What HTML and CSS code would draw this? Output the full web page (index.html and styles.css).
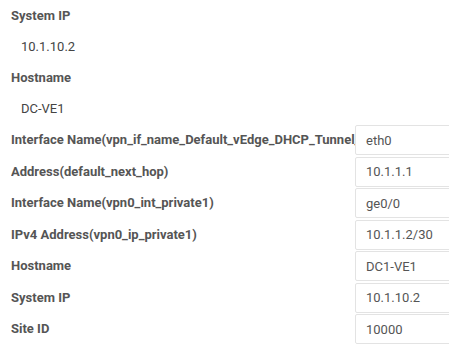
FILE: index.html
```html
<!DOCTYPE html>
<html lang="en">
<head>
    <meta charset="UTF-8">
    <title>Device Template Values</title>
    <link rel="stylesheet" href="styles.css">
</head>
<body>
    <div class="panel">
        <div class="field">
            <div class="field-label">System IP</div>
            <div class="field-value">10.1.10.2</div>
        </div>
        <div class="field">
            <div class="field-label">Hostname</div>
            <div class="field-value">DC-VE1</div>
        </div>

        <div class="vars">
            <label class="var-name">Interface Name(vpn_if_name_Default_vEdge_DHCP_Tunnel_Interface)</label>
            <input class="var-input" type="text" value="eth0">

            <label class="var-name">Address(default_next_hop)</label>
            <input class="var-input" type="text" value="10.1.1.1">

            <label class="var-name">Interface Name(vpn0_int_private1)</label>
            <input class="var-input" type="text" value="ge0/0">

            <label class="var-name">IPv4 Address(vpn0_ip_private1)</label>
            <input class="var-input" type="text" value="10.1.1.2/30">

            <label class="var-name">Hostname</label>
            <input class="var-input" type="text" value="DC1-VE1">

            <label class="var-name">System IP</label>
            <input class="var-input" type="text" value="10.1.10.2">

            <label class="var-name">Site ID</label>
            <input class="var-input" type="text" value="10000">
        </div>
    </div>
</body>
</html>
```

FILE: styles.css
```css
body {
    margin: 0;
    font-family: Roboto, "Liberation Sans", sans-serif;
    font-size: 13px;
    color: #555;
    background-color: white;
    overflow: hidden;
}
.panel {
    padding: 0 0 0 11px;
    width: 520px;
}
.field-label,
.field-value {
    height: 31px;
    line-height: 31px;
}
.field-label {
    font-weight: bold;
}
.field-value {
    padding-left: 10px;
    color: #444;
}
.vars {
    display: grid;
    grid-template-columns: 344px 160px;
    grid-auto-rows: 30px;
    row-gap: 1.5px;
    margin-top: 1px;
}
.var-name {
    font-weight: bold;
    line-height: 30px;
    white-space: nowrap;
    overflow: hidden;
}
.var-input {
    box-sizing: border-box;
    height: 30px;
    margin: 0;
    padding: 0 10px;
    border: 1px solid #e3e3e3;
    border-radius: 2px;
    font-family: inherit;
    font-size: 13px;
    color: #555;
    outline: none;
}
```
